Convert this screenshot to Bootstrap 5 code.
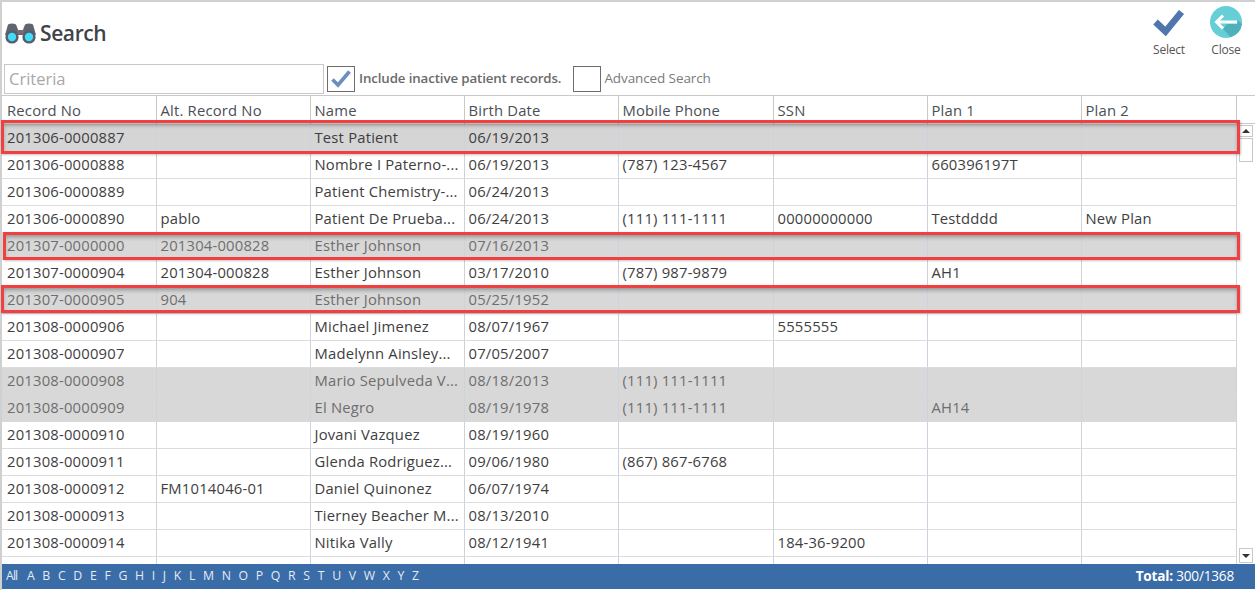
<!DOCTYPE html>
<html lang="en"><head><meta charset="utf-8"><title>Search</title>
<link href="https://cdn.jsdelivr.net/npm/bootstrap@5.3.0/dist/css/bootstrap.min.css" rel="stylesheet">
<style>
html,body{height:590px;overflow:hidden;background:#fff}
body{font-family:"Open Sans","Noto Sans",sans-serif;color:#3c3c3c;font-size:14px}
.shell{width:1255px;height:590px;border-top:2px solid #d0d0d0;border-left:2px solid #d0d0d0;position:relative;display:flex;flex-direction:column}
.topbar{height:60px;padding:0 5px 0 3px}
.ttl{font-size:21px;font-weight:600;color:#3f444a;letter-spacing:-.4px;margin-top:16px;gap:4px}
.tool{width:48px;font-size:12px;color:#555;margin-top:4px;letter-spacing:-.2px}
.tool svg{display:block}
.ic-sel{margin-top:3px;margin-bottom:5px}
.ic-cls{margin-bottom:3px}
.tool-gap{margin-right:9px}
.filterbar{height:33px;padding-left:2px;gap:3px}
.crit{width:320px;height:30px;border:1px solid #c8c8c8;border-radius:0;padding:0 4px;font-size:16.5px;color:#333;font-family:inherit}
.crit::placeholder{color:#a8a8a8;opacity:1}
.chk{width:28px;height:26px;border:1px solid #6d6d6d;background:#fff;flex:none}
.lbl1{font-size:13.3px;font-weight:600;color:#6a6a6a;letter-spacing:-.12px;margin:0 9px 0 1px}
.lbl2{font-size:13.5px;color:#7a7a7a;letter-spacing:-.1px}
.gridwrap{flex:1;min-height:0;border-top:1px solid #c8c8c8;overflow:hidden;display:flex}
.datagrid{table-layout:fixed;width:1234px;margin:0;border-collapse:collapse;--bs-table-bg:transparent}
.datagrid th,.datagrid td{height:27px;padding:0 4px;font-size:14.8px;font-weight:400;white-space:nowrap;overflow:hidden;color:#3e3e3e;border-bottom:1px solid #dcdcdc;border-right:1px solid #cbd3de;vertical-align:middle;letter-spacing:.2px;box-shadow:none}
.datagrid th:first-child,.datagrid td:first-child{padding-left:5px}
.datagrid th{border-right-color:#c8c8c8;border-bottom-color:#c8c8c8;color:#4a4f55;padding-top:0;height:28px}
.datagrid tr.off td{background:#d8d8d8;color:#6e6e6e;border-bottom-color:#d8d8d8}
.datagrid tr.hit td{background:#d5d5d5;color:#3e3e3e}
.sbar{width:19px;flex:none;display:flex;flex-direction:column;border-left:1px solid #fff}
.sbhead{height:28px;border-bottom:1px solid #c8c8c8}
.sbbtn{height:12px;margin:1px 3px 0 1px;border:1px solid #c8c8c8;display:flex;align-items:center;justify-content:center;background:#fff}
.sbthumb{height:24px;margin:1px 3px 0 1px;border:1px solid #c8c8c8}
.sbfill{flex:1}
.sbend{height:15px;margin-bottom:1px}
.tri-u{width:0;height:0;border:4px solid transparent;border-top:0;border-bottom:4px solid #333}
.tri-d{width:0;height:0;border:4px solid transparent;border-bottom:0;border-top:4px solid #333}
.redbox{position:absolute;border:3px solid #f04040;box-shadow:inset 0 3px 4px -1px rgba(60,60,60,.45),1px 1px 2px rgba(60,60,60,.3);pointer-events:none}
.rb-a{top:118px;height:34px;left:-1px;width:1239px}
.rb-b{top:230px;height:28px;left:1px;width:1237px}
.rb-c{top:283px;height:28px;left:-1px;width:1239px}
.footbar{height:25px;background:#3a6ca7;color:#fff;padding:0 21px 0 4px;flex:none;margin-bottom:1px}
.alpha{gap:7.65px;font-size:12.3px;color:#e3ebf4}
.alpha span:first-child{letter-spacing:-.9px;margin-right:2px}
.tot{font-size:13.6px;letter-spacing:-.2px}
</style></head>
<body>
<div class="shell">
  <div class="topbar d-flex justify-content-between">
    <div class="ttl d-flex align-items-center align-self-start">
      <svg width="31" height="21" viewBox="0 0 31 21"><path d="M3 1.5Q7-.5 11 1.5L13.5 8h4L20 1.5Q24-.5 28 1.5L31 12H0z" fill="#5f6470"/><rect x="12" y="7" width="7" height="4" fill="#7b6a74"/><circle cx="7" cy="14" r="6.6" fill="#575d6b"/><circle cx="24" cy="14" r="6.6" fill="#575d6b"/><circle cx="7" cy="14" r="4.2" fill="#3fdcfb"/><circle cx="24" cy="14" r="4.2" fill="#3fdcfb"/></svg>
      <span>Search</span>
    </div>
    <div class="d-flex">
      <div class="tool tool-gap d-flex flex-column align-items-center">
        <svg class="ic-sel" width="32" height="27" viewBox="0 0 32 27"><path d="M2.5 13L12.5 22.5L28.5 3" fill="none" stroke="#4f77ad" stroke-width="6.6"/></svg>
        <span>Select</span>
      </div>
      <div class="tool d-flex flex-column align-items-center">
        <svg class="ic-cls" width="32" height="32" viewBox="0 0 32 32"><circle cx="16" cy="16" r="16" fill="#66cfd6"/><path d="M13 23l7.5 8A16 16 0 0 0 32 18l-4.500-4v4H17z" fill="#4fb0bd"/><path d="M13 9.500L6.500 16L13 22.500M7 16H27" fill="none" stroke="#fff" stroke-width="3"/></svg>
        <span>Close</span>
      </div>
    </div>
  </div>
  <div class="filterbar d-flex align-items-center">
    <input class="crit form-control" placeholder="Criteria">
    <div class="chk d-flex align-items-center justify-content-center"><svg width="20" height="18" viewBox="0 0 20 18"><path d="M1.500 9.500L7 15L18.500 1.500" fill="none" stroke="#6d8fc0" stroke-width="3.600"/></svg></div>
    <span class="lbl1">Include inactive patient records.</span>
    <div class="chk"></div>
    <span class="lbl2">Advanced Search</span>
  </div>
  <div class="gridwrap">
    <table class="table datagrid">
      <colgroup><col style="width:154px"><col style="width:154px"><col style="width:154px"><col style="width:154px"><col style="width:155px"><col style="width:154px"><col style="width:154px"><col style="width:155px"></colgroup>
      <thead><tr><th>Record No</th><th>Alt. Record No</th><th>Name</th><th>Birth Date</th><th>Mobile Phone</th><th>SSN</th><th>Plan 1</th><th>Plan 2</th></tr></thead>
      <tbody>
        <tr class="hit"><td>201306-0000887</td><td></td><td>Test Patient</td><td>06/19/2013</td><td></td><td></td><td></td><td></td></tr>
        <tr><td>201306-0000888</td><td></td><td>Nombre I Paterno-...</td><td>06/19/2013</td><td>(787) 123-4567</td><td></td><td>660396197T</td><td></td></tr>
        <tr><td>201306-0000889</td><td></td><td>Patient Chemistry-...</td><td>06/24/2013</td><td></td><td></td><td></td><td></td></tr>
        <tr><td>201306-0000890</td><td>pablo</td><td>Patient De Prueba...</td><td>06/24/2013</td><td>(111) 111-1111</td><td>00000000000</td><td>Testdddd</td><td>New Plan</td></tr>
        <tr class="off"><td>201307-0000000</td><td>201304-000828</td><td>Esther Johnson</td><td>07/16/2013</td><td></td><td></td><td></td><td></td></tr>
        <tr><td>201307-0000904</td><td>201304-000828</td><td>Esther Johnson</td><td>03/17/2010</td><td>(787) 987-9879</td><td></td><td>AH1</td><td></td></tr>
        <tr class="off"><td>201307-0000905</td><td>904</td><td>Esther Johnson</td><td>05/25/1952</td><td></td><td></td><td></td><td></td></tr>
        <tr><td>201308-0000906</td><td></td><td>Michael Jimenez</td><td>08/07/1967</td><td></td><td>5555555</td><td></td><td></td></tr>
        <tr><td>201308-0000907</td><td></td><td>Madelynn Ainsley...</td><td>07/05/2007</td><td></td><td></td><td></td><td></td></tr>
        <tr class="off"><td>201308-0000908</td><td></td><td>Mario Sepulveda V...</td><td>08/18/2013</td><td>(111) 111-1111</td><td></td><td></td><td></td></tr>
        <tr class="off"><td>201308-0000909</td><td></td><td>El Negro</td><td>08/19/1978</td><td>(111) 111-1111</td><td></td><td>AH14</td><td></td></tr>
        <tr><td>201308-0000910</td><td></td><td>Jovani Vazquez</td><td>08/19/1960</td><td></td><td></td><td></td><td></td></tr>
        <tr><td>201308-0000911</td><td></td><td>Glenda Rodriguez...</td><td>09/06/1980</td><td>(867) 867-6768</td><td></td><td></td><td></td></tr>
        <tr><td>201308-0000912</td><td>FM1014046-01</td><td>Daniel Quinonez</td><td>06/07/1974</td><td></td><td></td><td></td><td></td></tr>
        <tr><td>201308-0000913</td><td></td><td>Tierney Beacher M...</td><td>08/13/2010</td><td></td><td></td><td></td><td></td></tr>
        <tr><td>201308-0000914</td><td></td><td>Nitika Vally</td><td>08/12/1941</td><td></td><td>184-36-9200</td><td></td><td></td></tr>
        <tr><td></td><td></td><td></td><td></td><td></td><td></td><td></td><td></td></tr>
      </tbody>
    </table>
    <div class="sbar">
      <div class="sbhead"></div>
      <div class="sbbtn"><span class="tri-u"></span></div>
      <div class="sbthumb"></div>
      <div class="sbfill"></div>
      <div class="sbbtn sbend"><span class="tri-d"></span></div>
    </div>
  </div>
  <div class="footbar d-flex justify-content-between align-items-center">
    <div class="alpha d-flex"><span>All</span><span>A</span><span>B</span><span>C</span><span>D</span><span>E</span><span>F</span><span>G</span><span>H</span><span>I</span><span>J</span><span>K</span><span>L</span><span>M</span><span>N</span><span>O</span><span>P</span><span>Q</span><span>R</span><span>S</span><span>T</span><span>U</span><span>V</span><span>W</span><span>X</span><span>Y</span><span>Z</span></div>
    <div class="tot"><b>Total:</b> 300/1368</div>
  </div>
  <div class="redbox rb-a"></div>
  <div class="redbox rb-b"></div>
  <div class="redbox rb-c"></div>
</div>
</body></html>
